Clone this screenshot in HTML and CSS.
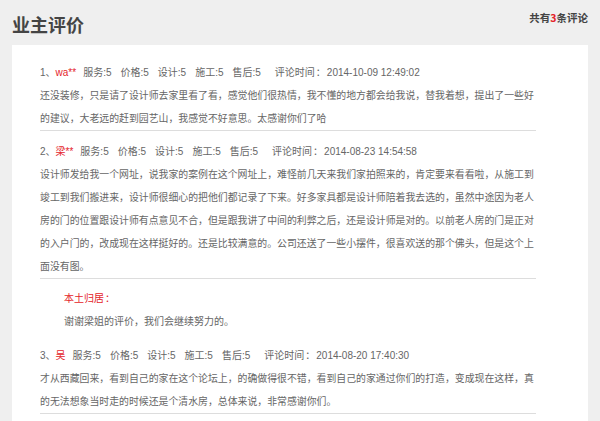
FILE: index.html
```html
<!DOCTYPE html>
<html lang="zh-CN">
<head>
  <meta charset="UTF-8" />
  <title>业主评价</title>
  <link rel="stylesheet" href="styles.css">
</head>
<body>
  <div class="page-head">
    <h1>业主评价</h1>
    <div class="total">共有<em>3</em>条评论</div>
  </div>

  <div class="review-box">
    <div class="review">
      <div class="review-meta">
        <span class="num">1、<b class="user">wa**</b></span>
        <span>服务:5</span>
        <span>价格:5</span>
        <span>设计:5</span>
        <span>施工:5</span>
        <span>售后:5</span>
        <span class="time">评论时间<i class="colon">：</i>2014-10-09 12:49:02</span>
      </div>
      <p class="review-text">还没装修，只是请了设计师去家里看了看，感觉他们很热情，我不懂的地方都会给我说，替我着想，提出了一些好的建议，大老远的赶到园艺山，我感觉不好意思。太感谢你们了哈</p>
    </div>

    <div class="review">
      <div class="review-meta">
        <span class="num">2、<b class="user">梁**</b></span>
        <span>服务:5</span>
        <span>价格:5</span>
        <span>设计:5</span>
        <span>施工:5</span>
        <span>售后:5</span>
        <span class="time">评论时间<i class="colon">：</i>2014-08-23 14:54:58</span>
      </div>
      <p class="review-text">设计师发给我一个网址，说我家的案例在这个网址上，难怪前几天来我们家拍照来的，肯定要来看看啦，从施工到竣工到我们搬进来，设计师很细心的把他们都记录了下来。好多家具都是设计师陪着我去选的，虽然中途因为老人房的门的位置跟设计师有点意见不合，但是跟我讲了中间的利弊之后，还是设计师是对的。以前老人房的门是正对的入户门的，改成现在这样挺好的。还是比较满意的。公司还送了一些小摆件，很喜欢送的那个佛头，但是这个上面没有图。</p>
    </div>

    <div class="reply">
      <div class="reply-name">本土归居<i class="colon">：</i></div>
      <p class="reply-text">谢谢梁姐的评价，我们会继续努力的。</p>
    </div>

    <div class="review">
      <div class="review-meta">
        <span class="num">3、<b class="user">吴</b></span>
        <span>服务:5</span>
        <span>价格:5</span>
        <span>设计:5</span>
        <span>施工:5</span>
        <span>售后:5</span>
        <span class="time">评论时间<i class="colon">：</i>2014-08-20 17:40:30</span>
      </div>
      <p class="review-text">才从西藏回来，看到自己的家在这个论坛上，的确做得很不错，看到自己的家通过你们的打造，变成现在这样，真的无法想象当时走的时候还是个清水房，总体来说，非常感谢你们。</p>
    </div>
  </div>
</body>
</html>
```

FILE: styles.css
```css
body {
  margin: 0;
  padding: 0 12px;
  background-color: #efefef;
  font-family: "Liberation Sans", "Noto Sans CJK SC", sans-serif;
  color: #666;
  height: 421px;
  overflow: hidden;
}

.page-head {
  display: flex;
  justify-content: space-between;
  align-items: flex-start;
  height: 45px;
}

h1 {
  margin: 0;
  padding-top: 12px;
  font-family: "Noto Sans CJK SC", sans-serif;
  font-size: 18px;
  line-height: 24px;
  font-weight: bold;
  color: #444;
}

.total {
  padding-top: 11px;
  font-family: "Noto Sans CJK SC", sans-serif;
  font-size: 10.5px;
  line-height: 14px;
  font-weight: bold;
  color: #444;
}

.total em {
  font-style: normal;
  color: #e4232a;
}

.review-box {
  background-color: #fff;
  padding: 16px 0 0 28px;
  height: 400px;
}

.review {
  width: 496px;
  padding-top: 9px;
  border-bottom: 1px solid #ddd;
}

.review:first-child {
  padding-top: 0;
}

.review-meta {
  display: flex;
  font-size: 10px;
  line-height: 23px;
  white-space: nowrap;
}

.review-meta span {
  margin-right: 9px;
}

.review-meta .num {
  margin-right: 7px;
}

.review-meta .time {
  margin-left: 5px;
}

.colon {
  display: inline-block;
  width: 1.2em;
  text-align: center;
  font-style: normal;
}

.user {
  font-weight: normal;
  color: #e4232a;
}

.review-text {
  margin: 0;
  font-size: 9.9px;
  line-height: 23px;
}

.reply {
  padding: 8px 0 2px 24px;
}

.reply-name {
  font-size: 10px;
  line-height: 23px;
  color: #e4232a;
}

.reply-text {
  margin: 0;
  font-size: 10px;
  line-height: 23px;
}
```
